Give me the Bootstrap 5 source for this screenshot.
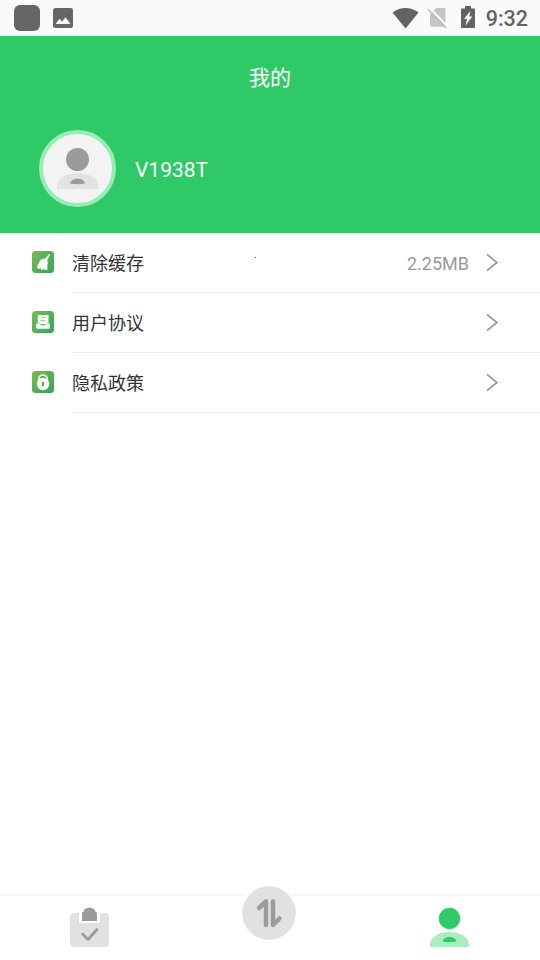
<!DOCTYPE html>
<html lang="zh-CN">
<head>
<meta charset="utf-8">
<meta name="viewport" content="width=device-width, initial-scale=1">
<title>我的</title>
<link href="https://cdn.jsdelivr.net/npm/bootstrap@5.3.0/dist/css/bootstrap.min.css" rel="stylesheet">
<style>
  body { font-family: Roboto, "Noto Sans CJK SC", sans-serif; color: #333; }
  svg { display: block; flex: none; }
  .status-bar { height: 36px; background: #fafafa; color: #636363; padding: 0 12px 0 14px; }
  .app-tile { width: 26px; height: 26px; border-radius: 6px; background: #666; }
  .picture-icon { margin-left: 13px; }
  .sim-icon { margin-left: 8px; }
  .battery-icon { margin-left: 14px; margin-bottom: 2px; }
  .clock { font-size: 21.5px; font-weight: 500; line-height: 36px; padding-top: 1px; margin-left: 11px; }
  .profile { height: 197px; background: #2fca67; }
  .page-title { font-size: 21px; line-height: 30px; padding-top: 27px; }
  .profile-row { padding: 37px 39px 0; gap: 19px; }
  .avatar { width: 77px; height: 77px; border: 4px solid #97edb5; background: #f3f3f3; }
  .user-name { font-size: 21px; line-height: 30px; padding-top: 2px; }
  .menu-row { height: 60px; padding-left: 32px; }
  .menu-row .line { height: 60px; margin-left: 18px; padding-right: 42px; border-bottom: 1px solid #ededed; font-size: 18px; }
  .menu-label { padding-top: 2px; }
  .cache-size { color: #999; margin-right: 17px; padding-top: 2px; }
  .tab-bar { height: 66px; border-top: 2px solid #f6f6f6; }
  .center-tab { margin-top: -12px; margin-left: -2px; }
  .center-disc { width: 58px; height: 58px; border: 2px solid #fff; background: #e1e1e1; background-clip: padding-box; }
  .speck { width: 1px; height: 1px; background: #555; margin: -10px auto 0 111px; }
</style>
<script src="https://cdn.jsdelivr.net/npm/bootstrap@5.3.0/dist/js/bootstrap.bundle.min.js"></script>
</head>
<body class="bg-white overflow-hidden">
<svg width="0" height="0" class="position-absolute" aria-hidden="true">
  <defs>
    <linearGradient id="tile" x1="0" y1="0" x2="1" y2="1"><stop offset="0" stop-color="#79bc50"/><stop offset="1" stop-color="#32a75b"/></linearGradient>
  </defs>
</svg>
<div class="d-flex flex-column vh-100">
  <div class="status-bar d-flex align-items-center">
    <span class="app-tile"></span>
    <svg class="picture-icon" width="20" height="20" viewBox="0 0 20 20"><rect width="20" height="20" rx="2.500" fill="#666"/><path d="M2.500 16l4-5.200 2.600 3 3.300-4.600 5.200 6.800z" fill="#fafafa"/></svg>
    <svg class="ms-auto" width="27" height="21" viewBox="0 0 27 21"><path d="M.5 4.400Q13.500-4.400 26.500 4.400L13.500 20.500z" fill="#636363"/></svg>
    <svg class="sim-icon" width="20" height="22" viewBox="0 0 20 22"><path d="M3 7l6-6h8q1.500 0 1.500 1.500v15.500q0 1.800-1.800 1.800H4.800Q3 19.800 3 18z" fill="#c4c4c4"/><path d="M2 .2L20 19" stroke="#fafafa" stroke-width="2"/><path d="M.8 2L19 21" stroke="#bdbdbd" stroke-width="1.700"/></svg>
    <svg class="battery-icon" width="14" height="22" viewBox="0 0 14 22"><path d="M4 0h6v2.500h3q1 0 1 1V21q0 1-1 1H1q-1 0-1-1V3.500q0-1 1-1h3z" fill="#636363"/><path d="M9.500 5L3 12.700h3L4.500 19.500 11.300 10.500H8.300z" fill="#fafafa"/></svg>
    <span class="clock">9:32</span>
  </div>
  <header class="profile text-white">
    <div class="page-title text-center">我的</div>
    <div class="profile-row d-flex align-items-center">
      <div class="avatar rounded-circle d-flex justify-content-center">
        <svg width="43" height="56" viewBox="-0.500 0 43 56"><circle cx="21" cy="25.500" r="11.500" fill="#9b9b9b"/><path d="M.5 55V51C1 44 9 39.500 21 39.500S41 44 42 51v4z" fill="#e2e2e2"/><path d="M13.500 49.500C14 46.500 17 44.800 21 44.800s7 1.700 7.500 4.700q-7.500 1.500-15 0z" fill="#9b9b9b"/></svg>
      </div>
      <div class="user-name">V1938T</div>
    </div>
  </header>
  <main class="flex-grow-1">
    <div class="menu-row d-flex">
      <svg class="align-self-center" width="22" height="24" viewBox="0 0 22 24"><rect width="22" height="22" rx="3.500" fill="url(#tile)"/><path d="M16.800 3Q18.300 3.500 17.500 5L15.200 9.100 16 12 8.500 9 11 7.600 13 8.100z" fill="#fff"/><path d="M8.200 8.800L15.900 11.900Q14.800 15 15.500 18.500L12.600 19 12.300 17.400 10.500 19 8.600 18.400 9 16.800 6.800 18 4.500 16.500 6.500 14.500 4.800 14.700Q7.500 12.500 8.200 8.800z" fill="#fff"/></svg>
      <div class="line flex-grow-1 d-flex align-items-center"><span class="menu-label">清除缓存</span><i class="speck"></i><span class="cache-size">2.25MB</span>
        <svg width="12" height="20" viewBox="0 0 12 20"><path d="M1 1.500l10 8L1 17.500" fill="none" stroke="#999" stroke-width="1.700"/></svg></div>
    </div>
    <div class="menu-row d-flex">
      <svg class="align-self-center" width="22" height="24" viewBox="0 0 22 24"><rect width="22" height="22" rx="3.500" fill="url(#tile)"/><path d="M5.700 4h10.800v9.200H5.700z" fill="#fff"/><path d="M4.200 12.500h3.300q1 1.900 3.500 1.900t3.500-1.900h3.300v4.200q0 1-1 1H5.200q-1 0-1-1z" fill="#fff"/><path d="M9 7.200q2-1 4.500-.5M8.500 9.800h5" fill="none" stroke="#5eb65a" stroke-width=".8"/><path d="M5 12.300h2.500q1 1.700 3.500 1.700t3.500-1.700H17" fill="none" stroke="#5eb65a" stroke-width=".5"/></svg>
      <div class="line flex-grow-1 d-flex align-items-center"><span class="menu-label">用户协议</span>
        <svg class="ms-auto" width="12" height="20" viewBox="0 0 12 20"><path d="M1 1.500l10 8L1 17.500" fill="none" stroke="#999" stroke-width="1.700"/></svg></div>
    </div>
    <div class="menu-row d-flex">
      <svg class="align-self-center" width="22" height="24" viewBox="0 0 22 24"><rect width="22" height="22" rx="3.500" fill="url(#tile)"/><path d="M6.700 9.500V8a4.300 4 0 0 1 8.600 0v1.500" fill="none" stroke="#fff" stroke-width="1.500"/><circle cx="11" cy="13" r="6.200" fill="#fff"/><path d="M11 11.500v3" stroke="#4cae58" stroke-width="1.900" stroke-linecap="round"/></svg>
      <div class="line flex-grow-1 d-flex align-items-center"><span class="menu-label">隐私政策</span>
        <svg class="ms-auto" width="12" height="20" viewBox="0 0 12 20"><path d="M1 1.500l10 8L1 17.500" fill="none" stroke="#999" stroke-width="1.700"/></svg></div>
    </div>
  </main>
  <nav class="tab-bar row g-0">
    <div class="col-4 d-flex justify-content-center">
      <svg width="40" height="52" viewBox="0 0 40 52"><rect y="17" width="39" height="34" rx="4" fill="#e1e1e1"/><path d="M9 16h21v11H9z" fill="#fff"/><path d="M12 25V17.500q0-1.500 1.500-1.800C14 10.500 25 10.500 25.500 15.700q1.500.3 1.500 1.800V25z" fill="#9b9b9b"/><path d="M12.500 38l5.500 5.500 9-10" fill="none" stroke="#9b9b9b" stroke-width="2.700" stroke-linecap="round" stroke-linejoin="round"/></svg>
    </div>
    <div class="col-4 d-flex justify-content-center">
      <div class="center-tab"><div class="center-disc rounded-circle">
        <svg width="54" height="54" viewBox="0 0 54 54"><path d="M17 22l7-6.500V39M31 15.500V39l6.500-6.500" fill="none" stroke="#9b9b9b" stroke-width="4.500" stroke-linecap="round" stroke-linejoin="round"/></svg>
      </div></div>
    </div>
    <div class="col-4 d-flex justify-content-center">
      <svg width="40" height="52" viewBox="0 0 40 52"><circle cx="19.500" cy="22.500" r="10.700" fill="#30ca68"/><path d="M0 51v-3C1 40.500 9 36 19.500 36S38 40.500 39 48v3z" fill="#a9edc0"/><path d="M12.500 45.500c.5-3 3.500-4.500 7-4.500s6.500 1.500 7 4.500q-7 1.300-14 0z" fill="#30ca68"/></svg>
    </div>
  </nav>
</div>
</body>
</html>
